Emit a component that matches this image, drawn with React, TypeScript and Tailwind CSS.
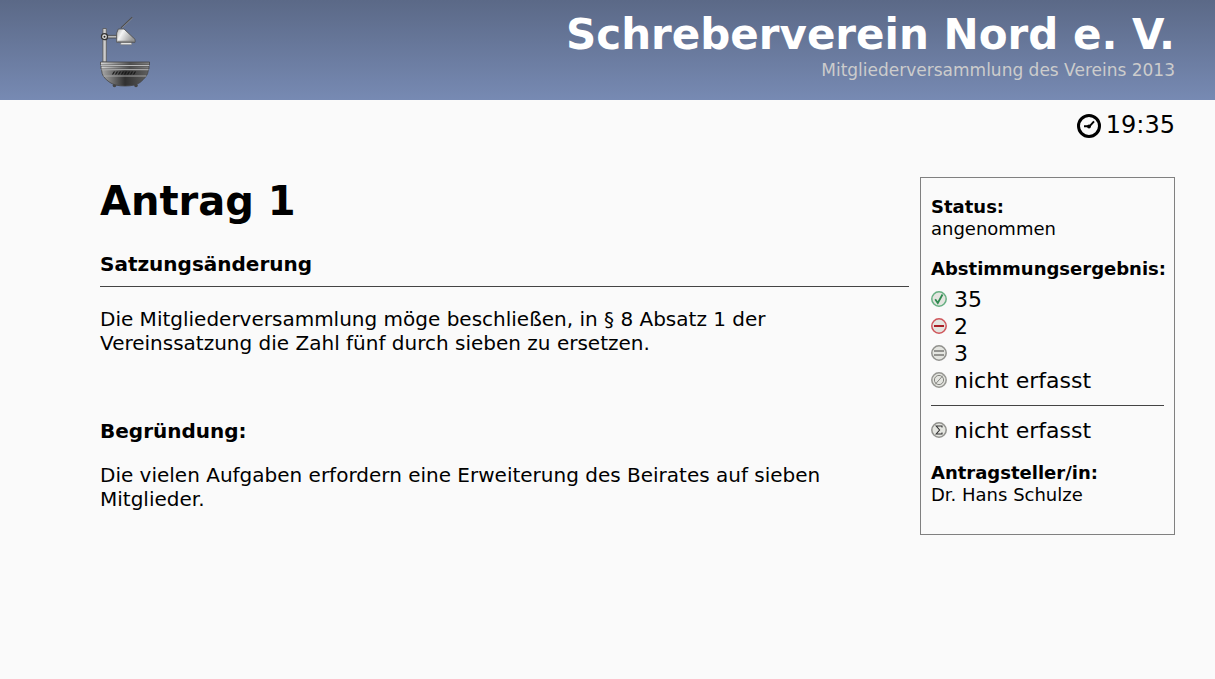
import type { ReactNode } from "react";

function Logo() {
  return (
    <svg width="52" height="74" viewBox="0 0 52 74" aria-hidden="true">
      <defs>
        <linearGradient id="bowl" x1="0" x2="1">
          <stop offset="0" stopColor="#a8a8a8" />
          <stop offset="0.5" stopColor="#303030" />
          <stop offset="1" stopColor="#606060" />
        </linearGradient>
        <linearGradient id="band" x1="0" x2="1">
          <stop offset="0" stopColor="#d8d8d8" />
          <stop offset="0.6" stopColor="#505050" />
          <stop offset="1" stopColor="#808080" />
        </linearGradient>
        <linearGradient id="head" x1="0" x2="1" y2="0.4">
          <stop offset="0" stopColor="#aaa" />
          <stop offset="0.35" stopColor="#f4f4f4" />
          <stop offset="1" stopColor="#999" />
        </linearGradient>
      </defs>
      <path d="M21 13 32.3 2.3" stroke="#4d4d4d" strokeWidth="1.3" />
      <path d="M21.7 13.2 32.6 3" stroke="#aaa" strokeWidth="0.5" />
      <path d="M2.9 13.5h3.4v33.5H2.9z" fill="#ccc" stroke="#555" strokeWidth="0.8" />
      <path d="M6 20.4h11v2.6H6z" fill="#bbb" stroke="#444" strokeWidth="0.8" />
      <circle cx="4.5" cy="21.7" r="3" fill="#ddd" stroke="#333" strokeWidth="1.3" />
      <circle cx="4.5" cy="21.7" r="1" fill="#222" />
      <path d="M20.7 27h11v2.7h-11z" fill="#e4e4e4" stroke="#777" strokeWidth="0.6" />
      <path d="M18.3 14h5.7L35 24.3v3H16.7V18z" fill="url(#head)" stroke="#4a4a4a" strokeWidth="0.8" />
      <path d="M17.2 26.3h17.3" stroke="#777" />
      <circle cx="14.5" cy="70.5" r="1.8" fill="#444" />
      <circle cx="36" cy="70.5" r="1.8" fill="#444" />
      <path d="M1.500 54.500H48.500Q48 59 46 61.500 43 65 40 67.500 35 71 25 71 15 71 10 67.500 6 65 3.500 61.500 1.800 59 1.500 54.500z" fill="url(#bowl)" stroke="#444" strokeWidth="0.8" />
      <path d="M.5 47h49v3H.5zM1 51h48v3H1z" fill="url(#band)" stroke="#444" strokeWidth="0.8" />
      <path d="M1 50.500h48M1.500 54.700h47" stroke="#c4c4c4" strokeWidth="0.9" />
      <path d="M3.500 61h43" stroke="#aaa" strokeWidth="0.9" />
      <path d="m12.500 59.500 2-3m1 3 2-3m1 3 2-3m1 3 2-3m1 3 2-3m1 3 2-3m1 3 2-3m1 3 2-3" stroke="#151515" strokeWidth="1.100" />
    </svg>
  );
}

function ClockIcon() {
  return (
    <svg width="24" height="25" viewBox="0 -1 24 25" fill="none" stroke="#000" aria-hidden="true">
      <circle cx="12" cy="12" r="10.500" strokeWidth="3" />
      <path d="M7 12.300h5.500l4.500-5" strokeWidth="2" />
      <circle cx="12" cy="12.500" r="1.900" fill="#000" stroke="none" />
    </svg>
  );
}

function Badge({ color, children }: { color: string; children: ReactNode }) {
  return (
    <svg width="16" height="16" viewBox="0 0 16 16" fill="none" className="shrink-0" aria-hidden="true">
      <circle cx="8" cy="8" r="7.200" fill="#e4e5e0" stroke={color} strokeWidth="1.500" />
      {children}
    </svg>
  );
}

const votes = [
  {
    value: "35",
    icon: (
      <Badge color="#68b083">
        <path d="M4.200 8.200 6.800 12 11.500 3.500" stroke="#2f8a50" strokeWidth="1.800" />
      </Badge>
    ),
  },
  {
    value: "2",
    icon: (
      <Badge color="#cf565b">
        <path d="M3 8h10" stroke="#a92025" strokeWidth="2" />
      </Badge>
    ),
  },
  {
    value: "3",
    icon: (
      <Badge color="#92928e">
        <path d="M3 6h10M3 10h10" stroke="#797975" strokeWidth="1.700" />
      </Badge>
    ),
  },
  {
    value: "nicht erfasst",
    icon: (
      <Badge color="#969692">
        <circle cx="8" cy="8" r="4.600" stroke="#858581" />
        <path d="M4 12.500 12 3.500" stroke="#858581" />
      </Badge>
    ),
  },
];

function Votes({ icon, value }: { icon: ReactNode; value: string }) {
  return (
    <li className="flex items-start gap-[7px] text-[22px] leading-[27px]">
      <span className="pt-[5px]">{icon}</span>
      <span>{value}</span>
    </li>
  );
}

export default function App() {
  return (
    <div className="min-h-screen bg-[#fafafa] font-['DejaVu_Sans',sans-serif] text-black">
      <header className="flex h-[100px] items-start justify-between bg-linear-to-b from-[#5b6987] to-[#778ab3] pl-[100px] pr-10 pt-[15px]">
        <Logo />
        <div className="-mt-[6px] text-right">
          <div className="text-[42px] font-bold leading-[52px] text-white">Schreberverein Nord e. V.</div>
          <div className="text-[17px] leading-[18px] text-[#cccccc]">
            Mitgliederversammlung des Vereins 2013
          </div>
        </div>
      </header>
      <div className="flex items-center justify-end gap-[5px] pr-10 pt-[11px] text-[24px] leading-[28px]">
        <ClockIcon />
        <time>19:35</time>
      </div>
      <div className="flex items-start gap-[11px] pl-[100px] pr-10 pt-[38px]">
        <main className="min-w-0 flex-1 text-[20px] leading-[24px]">
          <h1 className="text-[40px] font-bold leading-[48px]">Antrag 1</h1>
          <h2 className="mt-[27px] border-b border-[#444] pb-[10px] font-bold">Satzungsänderung</h2>
          <p className="mt-5 max-w-[740px]">
            Die Mitgliederversammlung möge beschließen, in § 8 Absatz 1 der Vereinssatzung die Zahl fünf durch sieben zu
            ersetzen.
          </p>
          <h3 className="mt-16 font-bold">Begründung:</h3>
          <p className="mt-5 max-w-[740px]">
            Die vielen Aufgaben erfordern eine Erweiterung des Beirates auf sieben Mitglieder.
          </p>
        </main>
        <aside className="w-[255px] shrink-0 border border-[#808080] px-[10px] pb-7 pt-[18px] text-[18px] leading-[22px]">
          <h3 className="font-bold">Status:</h3>
          <p>angenommen</p>
          <h3 className="mt-[18px] font-bold">Abstimmungsergebnis:</h3>
          <ul className="mt-[6px]">
            {votes.map((v, i) => (
              <Votes key={i} icon={v.icon} value={v.value} />
            ))}
          </ul>
          <hr className="my-[11px] border-[#444]" />
          <ul>
            <Votes
              value="nicht erfasst"
              icon={
                <Badge color="#92928e">
                  <path d="M11 5.500V4H5.200l3.400 4-3.400 4H11v-1.500" stroke="#333" strokeWidth="1.100" />
                </Badge>
              }
            />
          </ul>
          <h3 className="mt-[18px] font-bold">Antragsteller/in:</h3>
          <p>Dr. Hans Schulze</p>
        </aside>
      </div>
    </div>
  );
}
